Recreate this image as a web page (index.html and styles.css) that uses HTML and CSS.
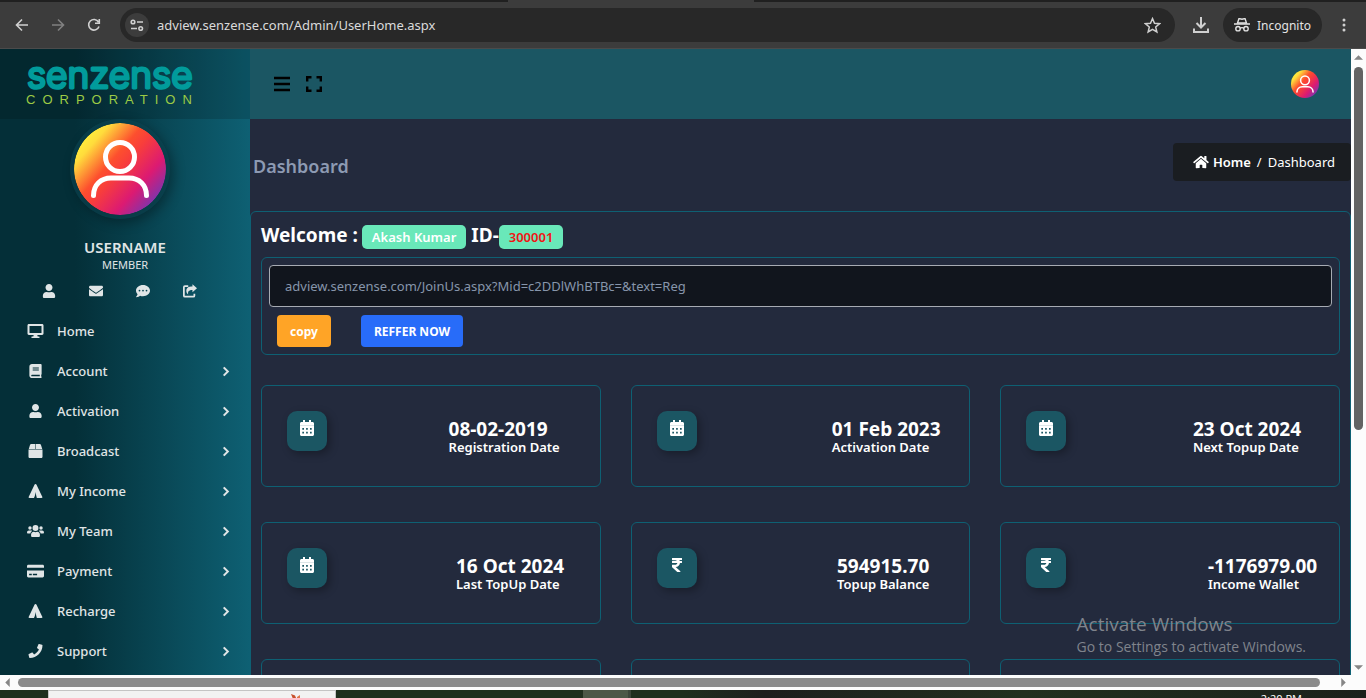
FILE: index.html
```html
<!DOCTYPE html>
<html lang="en">

<head>
    <meta charset="UTF-8">
    <meta name="viewport" content="width=device-width, initial-scale=1.0">
    <title>Dashboard</title>
    <link rel="stylesheet" href="styles.css">
</head>

<body>
    <svg class="sprite" aria-hidden="true">
        <symbol id="i-user" viewBox="0 0 448 512"><path d="M224 256c70.700 0 128-57.300 128-128S294.700 0 224 0 96 57.300 96 128s57.300 128 128 128zm89.600 32h-16.700c-22.200 10.200-46.900 16-72.900 16s-50.600-5.800-72.900-16h-16.700C60.200 288 0 348.200 0 422.400V464c0 26.500 21.500 48 48 48h352c26.500 0 48-21.500 48-48v-41.600c0-74.200-60.200-134.400-134.400-134.400z"/></symbol>
        <symbol id="i-mail" viewBox="0 0 512 512"><path d="M502.300 190.800c3.900-3.100 9.700-.2 9.700 4.700V400c0 26.500-21.500 48-48 48H48c-26.500 0-48-21.500-48-48V195.600c0-5 5.700-7.800 9.700-4.700 22.400 17.400 52.100 39.500 154.100 113.600 21.100 15.400 56.700 47.800 92.200 47.600 35.700.3 72-32.800 92.300-47.600 102-74.100 131.600-96.300 154-113.700zM256 320c23.200.4 56.600-29.200 73.400-41.400 132.700-96.300 142.800-104.700 173.400-128.700 5.800-4.500 9.200-11.500 9.200-18.900v-19c0-26.500-21.500-48-48-48H48c-26.500 0-48 21.500-48 48v19c0 7.400 3.400 14.300 9.200 18.900 30.600 23.900 40.700 32.400 173.400 128.700 16.800 12.200 50.200 41.800 73.400 41.400z"/></symbol>
        <symbol id="i-chat" viewBox="0 0 512 512"><path fill-rule="evenodd" d="M256 32C114.600 32 0 125.100 0 240c0 49.600 21.400 95 57 130.700C44.500 421.100 2.700 466 2.200 466.500c-2.200 2.300-2.800 5.700-1.500 8.700S4.800 480 8 480c66.300 0 116-31.800 140.600-51.400 32.700 12.300 69 19.400 107.400 19.400 141.400 0 256-93.100 256-208S397.400 32 256 32zM96 240a32 32 0 1 0 64 0a32 32 0 1 0-64 0zM224 240a32 32 0 1 0 64 0a32 32 0 1 0-64 0zM352 240a32 32 0 1 0 64 0a32 32 0 1 0-64 0z"/></symbol>
        <symbol id="i-share" viewBox="0 0 16 16"><path d="M6 2.500H2.200C1.500 2.500 1 3 1 3.700v9.600c0 .7.5 1.200 1.200 1.200h9.600c.7 0 1.200-.5 1.200-1.200v-2.300" fill="none" stroke="currentColor" stroke-width="2"/><path d="M16 4.800L10.800.3v2.600C6.200 3 3.800 4.300 3.800 7.900c0 1.700.9 3.200 2.100 4-.5-3.400.7-4.900 4.900-5v2.600z"/></symbol>
        <symbol id="i-desktop" viewBox="0 0 16 14"><path fill-rule="evenodd" d="M1.400 0h13.200C15.400 0 16 .6 16 1.400v8.200c0 .8-.6 1.400-1.400 1.400h-4.800l.4 1.500h1.300c.9 0 .9 1.500 0 1.500h-7c-.9 0-.9-1.500 0-1.500h1.300l.4-1.500H1.400C.6 11 0 10.400 0 9.600V1.400C0 .6.600 0 1.400 0zM2 2v7h12V2z"/></symbol>
        <symbol id="i-book" viewBox="0 0 14 16"><path fill-rule="evenodd" d="M3 0h10c.6 0 1 .4 1 1v10.500c0 .4-.2.700-.5.900v1.600c.7.300.7 2-.1 2H3c-1.700 0-3-1.300-3-3V3c0-1.700 1.300-3 3-3zM3.800 4v1.200h7V4zM3.800 6.300v1.200h7V6.300zM3 12.200c-1.200 0-1.200 1.900 0 1.900h8.900v-1.900z"/></symbol>
        <symbol id="i-box" viewBox="0 0 16 16"><path d="M3.200 0h4.500v5.700H.3l1.500-4.800C2 .3 2.500 0 3.200 0zM8.300 0h4.500c.7 0 1.200.3 1.400.9l1.500 4.800H8.300zM0 6.300h16v8.200c0 .8-.7 1.500-1.500 1.500h-13C.7 16 0 15.300 0 14.500z"/></symbol>
        <symbol id="i-tent" viewBox="0 0 16 16"><path d="M8 0c.6 0 1 .3 1.300 1L16 15.200c-.2.600-.6.800-1.200.8H9.500c-.6-2-1-4.500-1.300-7-.4 2.500-.9 5-2 7H1.200c-.6 0-1-.2-1.200-.8L6.700 1C7 .3 7.400 0 8 0z"/></symbol>
        <symbol id="i-users" viewBox="0 0 20 16"><circle cx="3.500" cy="4.500" r="2"/><circle cx="16.500" cy="4.500" r="2"/><circle cx="10" cy="4.500" r="3.500"/><path d="M0 10c0-1.400.9-2.500 2.200-2.500h2.600c.5 0 1 .2 1.300.5C5 8.700 4.200 9.700 4 11H.9C.4 11 0 10.600 0 10zM20 10c0-1.400-.9-2.500-2.200-2.500h-2.600c-.5 0-1 .2-1.300.5 1.100.7 1.900 1.700 2.100 3h3.100c.5 0 .9-.4.9-1zM4.800 12.500C4.800 10.300 6.300 9 8 9c1.500.6 2.500.6 4 0 1.700 0 3.200 1.300 3.200 3.500v1c0 .8-.7 1.500-1.500 1.500H6.300c-.8 0-1.500-.7-1.500-1.500z"/></symbol>
        <symbol id="i-card" viewBox="0 0 16 12"><path fill-rule="evenodd" d="M1.300 0h13.400c.7 0 1.300.6 1.300 1.300V3H0V1.300C0 .6.600 0 1.300 0zM0 5.500h16v5.200c0 .7-.6 1.300-1.300 1.300H1.300C.6 12 0 11.400 0 10.700zM2 8.500V10h2.500V8.500zM5.500 8.500V10h4V8.500z"/></symbol>
        <symbol id="i-phone" viewBox="0 0 512 512"><path d="M493.400 24.600l-104-24c-11.300-2.600-22.900 3.300-27.500 13.900l-48 112c-4.200 9.800-1.400 21.300 6.900 28l60.600 49.600c-36 76.700-98.900 140.500-177.200 177.200l-49.600-60.600c-6.800-8.300-18.200-11.100-28-6.900l-112 48C3.900 366.500-2 378.100.6 389.400l24 104C27.100 504.200 36.700 512 48 512c256.100 0 464-207.500 464-464 0-11.200-7.700-20.900-18.600-23.400z"/></symbol>
        <symbol id="i-right" viewBox="0 0 8 12"><path d="M1.500 1.500L6 6l-4.500 4.500" fill="none" stroke="currentColor" stroke-width="2.200"/></symbol>
        <symbol id="i-home" viewBox="0 0 576 512"><path d="M280.370 148.260L96 300.110V464a16 16 0 0 0 16 16l112.060-.29a16 16 0 0 0 15.920-16V368a16 16 0 0 1 16-16h64a16 16 0 0 1 16 16v95.640a16 16 0 0 0 16 16.050L464 480a16 16 0 0 0 16-16V300L295.670 148.260a12.190 12.190 0 0 0-15.300 0zM571.600 251.470L488 182.560V44.050a12 12 0 0 0-12-12h-56a12 12 0 0 0-12 12v72.610L318.470 43a48 48 0 0 0-61 0L4.340 251.470a12 12 0 0 0-1.600 16.900l25.500 31A12 12 0 0 0 45.150 301l235.220-193.740a12.190 12.190 0 0 1 15.300 0L530.900 301a12 12 0 0 0 16.900-1.600l25.500-31a12 12 0 0 0-1.700-16.930z"/></symbol>
        <symbol id="i-calendar" viewBox="0 0 14 16"><path d="M3 0h2v2h4V0h2v2h1.500c.8 0 1.500.7 1.500 1.500V5H0V3.500C0 2.700.7 2 1.500 2H3z"/><path opacity=".85" d="M0 5h14v1H0z"/><path fill-rule="evenodd" d="M0 6h14v8.500c0 .8-.7 1.500-1.500 1.500h-11C.7 16 0 15.300 0 14.500zM2.300 8v1.700H4V8zM6.100 8v1.700h1.700V8zM10 8v1.700h1.700V8zM2.300 11.700v1.700H4v-1.700zM6.100 11.700v1.700h1.700v-1.700zM10 11.700v1.700h1.700v-1.700z"/></symbol>
        <symbol id="i-rupee" viewBox="0 0 320 512"><path d="M308 96c6.627 0 12-5.373 12-12V44c0-6.627-5.373-12-12-12H12C5.373 32 0 37.373 0 44v44.748c0 6.627 5.373 12 12 12h85.280c27.308 0 48.261 9.958 60.970 27.252H12c-6.627 0-12 5.373-12 12v40c0 6.627 5.373 12 12 12h158.757c-6.217 36.086-32.558 58.632-74.757 58.632H12c-6.627 0-12 5.373-12 12v53.012c0 3.349 1.400 6.546 3.861 8.818l165.052 152.356a12 12 0 0 0 8.139 3.182h82.562c10.924 0 16.166-13.408 8.139-20.818L116.871 319.906c76.499-2.340 131.144-53.395 138.318-127.906H308c6.627 0 12-5.373 12-12v-40c0-6.627-5.373-12-12-12h-58.690c-3.486-11.541-8.280-22.246-14.252-32H308z"/></symbol>
        <symbol id="i-avatar" viewBox="0 0 92 92">
            <linearGradient id="sunset" x1="0.1" y1="0.15" x2="0.9" y2="0.85">
                <stop offset="0" stop-color="#fff03c"/>
                <stop offset="0.12" stop-color="#ffdc3c"/>
                <stop offset="0.38" stop-color="#fd4f2e"/>
                <stop offset="0.5" stop-color="#f83e3b"/>
                <stop offset="0.76" stop-color="#dc1a72"/>
                <stop offset="1" stop-color="#7a35b0"/>
            </linearGradient>
            <circle cx="46" cy="46" r="46" fill="url(#sunset)"/>
            <circle cx="46" cy="34" r="14.500" fill="none" stroke="#fff" stroke-width="5"/>
            <path d="M19.500 72.500C19.500 62 27 55 37 55h18c10 0 17.500 7 17.500 17.500" fill="none" stroke="#fff" stroke-width="5" stroke-linecap="round"/>
        </symbol>
    </svg>

    <div class="tabs"><span class="tab"></span></div>
    <div class="toolbar">
        <button class="tool" aria-label="Back"><svg viewBox="0 0 14 14"><path d="M13 7H2M7 1.500L1.500 7 7 12.500"/></svg></button>
        <button class="tool dim" aria-label="Forward"><svg viewBox="0 0 14 14"><path d="M1 7h11M7 1.500L12.500 7 7 12.500"/></svg></button>
        <button class="tool" aria-label="Reload"><svg viewBox="0 0 14 14"><path d="M12 8.500A5.300 5.300 0 1 1 11.500 4M12.300 1v4.200H8"/></svg></button>
        <div class="address">
            <button class="site" aria-label="Site settings"><svg viewBox="0 0 14 12"><path d="M7 3h6M1 9.500h6"/><circle cx="3" cy="3" r="1.800"/><circle cx="10.700" cy="9.500" r="1.800"/></svg></button>
            <input class="url" type="text" aria-label="Address" value="adview.senzense.com/Admin/UserHome.aspx">
            <button class="tool" aria-label="Bookmark"><svg class="star" viewBox="0 0 16 16"><path d="M8 1.500l1.900 4.400 4.700.4-3.600 3.100 1.100 4.700L8 11.600l-4.100 2.500L5 9.400 1.400 6.300l4.700-.4z"/></svg></button>
        </div>
        <button class="tool download" aria-label="Downloads"><svg viewBox="0 0 16 16"><path d="M8 0v10M3.500 6L8 10.500 12.500 6M1 11.500V15h14v-3.500"/></svg></button>
        <button class="incognito">
            <svg viewBox="0 0 16 14"><path d="M3.500 5L5 .5l3 .8 3-.8L12.500 5z"/><path d="M0 6h16M6 10.500c1-1 3-1 4 0"/><circle cx="4" cy="10.700" r="2.200"/><circle cx="12" cy="10.700" r="2.200"/></svg>
            Incognito
        </button>
        <button class="dots" aria-label="Menu"><svg viewBox="0 0 4 14"><circle cx="2" cy="2" r="1.500"/><circle cx="2" cy="7" r="1.500"/><circle cx="2" cy="12" r="1.500"/></svg></button>
    </div>

    <div class="window">
        <div class="page">
            <aside class="sidebar">
                <div class="brand">
                    <svg class="brand-name" viewBox="0 0 170 26"><text x="1" y="22">senzense</text></svg>
                    <span class="brand-sub">CORPORATION</span>
                </div>
                <div class="profile">
                    <svg class="avatar"><use href="#i-avatar"/></svg>
                    <strong class="username">USERNAME</strong>
                    <span class="role">MEMBER</span>
                    <div class="quick">
                        <a href="#" aria-label="Profile"><svg><use href="#i-user"/></svg></a>
                        <a href="#" aria-label="Mail"><svg><use href="#i-mail"/></svg></a>
                        <a href="#" aria-label="Chat"><svg><use href="#i-chat"/></svg></a>
                        <a href="#" aria-label="Share"><svg><use href="#i-share"/></svg></a>
                    </div>
                </div>
                <nav class="menu">
                    <a href="#"><svg><use href="#i-desktop"/></svg><span>Home</span></a>
                    <a href="#"><svg><use href="#i-book"/></svg><span>Account</span><svg class="arrow"><use href="#i-right"/></svg></a>
                    <a href="#"><svg><use href="#i-user"/></svg><span>Activation</span><svg class="arrow"><use href="#i-right"/></svg></a>
                    <a href="#"><svg><use href="#i-box"/></svg><span>Broadcast</span><svg class="arrow"><use href="#i-right"/></svg></a>
                    <a href="#"><svg><use href="#i-tent"/></svg><span>My Income</span><svg class="arrow"><use href="#i-right"/></svg></a>
                    <a href="#"><svg><use href="#i-users"/></svg><span>My Team</span><svg class="arrow"><use href="#i-right"/></svg></a>
                    <a href="#"><svg><use href="#i-card"/></svg><span>Payment</span><svg class="arrow"><use href="#i-right"/></svg></a>
                    <a href="#"><svg><use href="#i-tent"/></svg><span>Recharge</span><svg class="arrow"><use href="#i-right"/></svg></a>
                    <a href="#"><svg><use href="#i-phone"/></svg><span>Support</span><svg class="arrow"><use href="#i-right"/></svg></a>
                </nav>
            </aside>

            <div class="main">
                <header class="header">
                    <button aria-label="Toggle menu"><svg viewBox="0 0 16 16"><path d="M0 2h16M0 8h16M0 14h16" stroke="currentColor" stroke-width="2.500"/></svg></button>
                    <button aria-label="Full screen"><svg viewBox="0 0 16 16"><path d="M1.200 5.500V1.200h4.300M10.500 1.200h4.300v4.300M14.800 10.500v4.300h-4.300M5.500 14.800H1.200v-4.300" fill="none" stroke="currentColor" stroke-width="2.400"/></svg></button>
                    <button class="account" aria-label="Account"><svg><use href="#i-avatar"/></svg></button>
                </header>

                <div class="title-bar">
                    <h1>Dashboard</h1>
                    <div class="breadcrumb">
                        <a href="#"><svg><use href="#i-home"/></svg>Home</a>
                        <span>/</span>
                        <span>Dashboard</span>
                    </div>
                </div>

                <section class="panel">
                    <div class="welcome">
                        <span>Welcome :</span> <span class="badge">Akash Kumar</span> <span>ID-</span><span class="badge id">300001</span>
                    </div>
                    <div class="refer">
                        <input type="text" aria-label="Referral link" value="adview.senzense.com/JoinUs.aspx?Mid=c2DDlWhBTBc=&amp;text=Reg">
                        <div class="refer-buttons">
                            <button class="copy">copy</button>
                            <button class="now">REFFER NOW</button>
                        </div>
                    </div>
                    <div class="stats">
                        <div class="stat">
                            <span class="stat-icon"><svg><use href="#i-calendar"/></svg></span>
                            <div class="stat-text"><b>08-02-2019</b><span>Registration Date</span></div>
                        </div>
                        <div class="stat">
                            <span class="stat-icon"><svg><use href="#i-calendar"/></svg></span>
                            <div class="stat-text"><b>01 Feb 2023</b><span>Activation Date</span></div>
                        </div>
                        <div class="stat">
                            <span class="stat-icon"><svg><use href="#i-calendar"/></svg></span>
                            <div class="stat-text"><b>23 Oct 2024</b><span>Next Topup Date</span></div>
                        </div>
                        <div class="stat">
                            <span class="stat-icon"><svg><use href="#i-calendar"/></svg></span>
                            <div class="stat-text"><b>16 Oct 2024</b><span>Last TopUp Date</span></div>
                        </div>
                        <div class="stat">
                            <span class="stat-icon"><svg><use href="#i-rupee"/></svg></span>
                            <div class="stat-text"><b>594915.70</b><span>Topup Balance</span></div>
                        </div>
                        <div class="stat">
                            <span class="stat-icon"><svg><use href="#i-rupee"/></svg></span>
                            <div class="stat-text"><b>-1176979.00</b><span>Income Wallet</span></div>
                        </div>
                        <div class="stat"></div>
                        <div class="stat"></div>
                        <div class="stat"></div>
                    </div>
                </section>
            </div>
        </div>
        <div class="scroll-y">
            <svg viewBox="0 0 10 5"><path d="M5 0l5 5H0z"/></svg>
            <div class="thumb"></div>
            <svg viewBox="0 0 10 5"><path d="M0 0h10L5 5z"/></svg>
        </div>
        <div class="watermark">
            <div class="watermark-title">Activate Windows</div>
            <div>Go to Settings to activate Windows.</div>
        </div>
    </div>
    <div class="scroll-x">
        <svg viewBox="0 0 5 10"><path d="M5 0v10L0 5z"/></svg>
        <div class="thumb"></div>
        <svg viewBox="0 0 5 10"><path d="M0 0l5 5-5 5z"/></svg>
    </div>
    <footer class="taskbar">
        <div class="search"><svg viewBox="0 0 10 6"><path d="M0 1l4 1.500L5.500 6H2z" fill="#c8502d"/><path d="M6 4l3-2v4H6z" fill="#e0764a"/></svg></div>
        <div class="task"></div>
        <span class="clock">2:20 PM</span>
    </footer>
</body>

</html>
```
FILE: styles.css
```css
* {
    box-sizing: border-box;
}

body {
    margin: 0;
    height: 100vh;
    display: flex;
    flex-direction: column;
    overflow: hidden;
    background-color: #232a3d;
    color: #fff;
    font-family: "Noto Sans", sans-serif;
    font-size: 13px;
}

button {
    border: none;
    padding: 0;
    background: none;
    color: inherit;
    font: inherit;
    cursor: pointer;
}

a {
    color: inherit;
    text-decoration: none;
}

svg {
    display: block;
    fill: currentColor;
}

.sprite {
    position: absolute;
    width: 0;
    height: 0;
}

/* Browser bar */
.tabs {
    flex: none;
    display: flex;
    height: 2px;
    padding-left: 508px;
    background-color: #202020;
}

.tab {
    width: 246px;
    background-color: #3c3c3c;
}

.toolbar {
    flex: none;
    display: flex;
    align-items: center;
    height: 47px;
    padding: 0 20px 0 4px;
    background-color: #3c3c3c;
    border-bottom: 1px solid #4b4b4b;
    color: #d0d0d0;
}

.tool {
    flex: none;
    width: 36px;
}

.tool svg {
    width: 14px;
    height: 14px;
    margin: 0 auto;
    fill: none;
    stroke: currentColor;
    stroke-width: 1.6;
}

.tool .star {
    width: 17px;
    height: 17px;
    stroke-width: 1.4;
}

.dim {
    color: #808080;
}

.address {
    flex: 1;
    display: flex;
    align-items: center;
    height: 34px;
    margin-left: 8px;
    padding: 0 5px;
    border-radius: 17px;
    background-color: #282828;
}

.site {
    width: 24px;
    height: 24px;
    border-radius: 50%;
    background-color: #3c3c3c;
}

.site svg {
    width: 14px;
    height: 12px;
    margin: 0 auto;
    fill: none;
    stroke: currentColor;
    stroke-width: 1.6;
}

.url {
    flex: 1;
    border: none;
    padding: 0 8px;
    background: none;
    color: #dadada;
    font-family: "Noto Sans", sans-serif;
    font-size: 13px;
}

.download {
    margin: 0 4px 0 8px;
}

.download svg {
    width: 16px;
    height: 16px;
    stroke-width: 2;
}

.incognito {
    flex: none;
    display: flex;
    align-items: center;
    gap: 7px;
    height: 34px;
    padding: 0 11px;
    border-radius: 17px;
    background-color: #282828;
    color: #e3e3e3;
    font-size: 12px;
}

.incognito svg {
    width: 16px;
    height: 14px;
    stroke: currentColor;
    stroke-width: 1.4;
    fill: none;
}

.dots {
    margin-left: 20px;
}

.dots svg {
    width: 4px;
    height: 14px;
}

/* Page */
.window {
    position: relative;
    flex: 1;
    min-height: 0;
    display: flex;
}

.page {
    flex: 1;
    display: flex;
    overflow: hidden;
}

.sidebar {
    flex: none;
    width: 250px;
    background-image: linear-gradient(to right, #042f38 30%, #0e6073);
    color: #e0e5e6;
}

.brand {
    display: flex;
    flex-direction: column;
    gap: 1px;
    height: 70px;
    padding: 17px 26px 0;
    background-color: rgba(0, 0, 0, 0.15);
}

.brand-name {
    width: 170px;
    height: 26px;
    overflow: visible;
    fill: #019b9b;
    stroke: #019b9b;
    stroke-width: 3;
    stroke-linejoin: round;
    font-family: Inter, sans-serif;
    font-size: 37px;
    font-weight: 300;
}

.brand-sub {
    color: #9ccb45;
    font-family: "Liberation Sans", sans-serif;
    font-size: 13px;
    line-height: 13px;
    letter-spacing: 7px;
}

.profile {
    display: flex;
    flex-direction: column;
    align-items: center;
}

.avatar {
    width: 92px;
    height: 92px;
    margin: 4px 10px 0 0;
    border-radius: 50%;
    box-shadow: 0 0 0 4px rgba(12, 70, 84, 0.6), 4px 4px 12px 4px rgba(0, 0, 0, 0.3);
}

.username {
    margin-top: 22px;
    font-size: 15px;
    font-weight: 600;
    line-height: 20px;
}

.role {
    font-size: 11px;
    line-height: 16px;
}

.quick {
    display: flex;
    gap: 31px;
    margin: 11px 12px 13px 0;
}

.quick svg {
    width: 16px;
    height: 14px;
}

.menu a {
    display: flex;
    align-items: center;
    height: 40px;
    padding: 0 20px 0 27px;
    font-size: 13px;
    font-weight: 500;
}

.menu svg {
    width: 17px;
    height: 14px;
}

.menu span {
    flex: 1;
    padding-left: 13px;
}

.menu .arrow {
    width: 8px;
    height: 11px;
}

.main {
    flex: 1;
    min-width: 0;
}

.header {
    display: flex;
    align-items: center;
    gap: 16px;
    height: 70px;
    padding: 0 32px 0 24px;
    background-color: #1b5663;
    color: #000;
}

.header svg {
    width: 16px;
    height: 16px;
}

.header .account {
    margin-left: auto;
}

.header .account svg {
    width: 28px;
    height: 28px;
}

.title-bar {
    display: flex;
    align-items: center;
    justify-content: space-between;
    padding: 24px 0 30px 3px;
}

h1 {
    margin: 8px 0 0;
    color: #8d9ab3;
    font-size: 18px;
    font-weight: 600;
    line-height: 24px;
}

.breadcrumb {
    display: flex;
    align-items: center;
    gap: 6px;
    height: 38px;
    padding: 0 16px 0 20px;
    border-radius: 4px;
    background-color: #1a1d21;
    font-size: 13px;
}

.breadcrumb a {
    display: flex;
    align-items: center;
    gap: 4px;
    font-weight: 600;
}

.breadcrumb svg {
    width: 16px;
    height: 14px;
}

.panel {
    border: 1px solid #0e6073;
    border-radius: 6px;
    padding: 13px 10px;
}

.welcome {
    display: flex;
    height: 24px;
    font-size: 19px;
    font-weight: bold;
    line-height: 20px;
}

.badge {
    margin-left: 4px;
    margin-right: 5px;
    padding: 0 10px;
    border-radius: 5px;
    background-color: #69e8b9;
    font-size: 13px;
    font-weight: 600;
    line-height: 24px;
}

.badge.id {
    margin: 0;
    color: #f01414;
}

.refer {
    margin: 8px 0 30px;
    padding: 7px;
    border: 1px solid #0e6073;
    border-radius: 6px;
}

.refer input {
    display: block;
    width: 100%;
    height: 42px;
    padding: 0 15px;
    border: 1px solid #a7abb3;
    border-radius: 4px;
    background-color: #11151d;
    color: #8795ab;
    font-family: "Noto Sans", sans-serif;
    font-size: 13px;
}

.refer-buttons {
    display: flex;
    gap: 30px;
    padding: 8px 8px 0;
}

.refer-buttons button {
    height: 32px;
    padding: 0 13px;
    border-radius: 4px;
    font-size: 12px;
    font-weight: bold;
}

.copy {
    background-color: #ffa426;
}

.now {
    background-color: #286cf9;
}

.stats {
    display: grid;
    grid-template-columns: repeat(3, 1fr);
    gap: 35px 30px;
}

.stat {
    display: flex;
    justify-content: space-between;
    height: 102px;
    padding: 25px 40px 25px 25px;
    border: 1px solid #0e6073;
    border-radius: 6px;
}

.stat-icon {
    width: 40px;
    height: 40px;
    padding-top: 9px;
    border-radius: 10px;
    background-color: #1b5663;
    box-shadow: 3px 3px 8px rgba(0, 0, 0, 0.3);
}

.stat-icon svg {
    width: 16px;
    height: 16px;
    margin: 0 auto;
}

/* the caption sets the width of the block, the value may run past it */
.stat-text {
    display: flex;
    flex-direction: column;
    padding-top: 8px;
    white-space: nowrap;
}

.stat-text b {
    width: 0;
    font-size: 19px;
    line-height: 20px;
}

.stat-text span {
    font-size: 13px;
    font-weight: 600;
    line-height: 17px;
}

/* Scroll bars and desktop */
.scroll-y {
    flex: none;
    display: flex;
    flex-direction: column;
    align-items: center;
    width: 15px;
    padding: 6px 0 5px;
    background-color: #fcfcfc;
    color: #868686;
}

.scroll-y svg {
    width: 9px;
    height: 5px;
}

.scroll-y .thumb {
    width: 9px;
    height: 59%;
    margin: 7px 0 auto;
    border-radius: 5px;
    background-color: #636363;
}

.scroll-x {
    flex: none;
    display: flex;
    align-items: center;
    height: 15px;
    padding: 0 20px 0 5px;
    background-color: #fcfcfc;
    color: #868686;
}

.scroll-x svg {
    width: 5px;
    height: 9px;
}

.scroll-x .thumb {
    flex: 1;
    height: 9px;
    margin: 0 21px 0 8px;
    border-radius: 5px;
    background-color: #8b8b8b;
}

.watermark {
    position: absolute;
    right: 60px;
    bottom: 18px;
    color: #80848c;
    font-family: "Open Sans", sans-serif;
    font-size: 14px;
    line-height: 20px;
}

.watermark-title {
    font-size: 19px;
    line-height: 26px;
}

.taskbar {
    flex: none;
    display: flex;
    height: 8px;
    padding: 0 64px 0 48px;
    overflow: hidden;
    background-image: linear-gradient(to right, #1f2f1e 50%, #1d1f1d 56%, #22301f 75%, #1b211b);
}

.search {
    width: 288px;
    padding: 2px 0 0 242px;
    border: 1px solid #c4c4c4;
    border-bottom: none;
    background-color: #f2f2f2;
}

.search svg {
    width: 10px;
    height: 6px;
}

.task {
    width: 48px;
    margin-left: 247px;
    border-right: 3px solid #3c463a;
    background-color: #4c5847;
}

.clock {
    margin-left: auto;
    padding-top: 3px;
    font-family: "Open Sans", sans-serif;
    font-size: 11px;
    line-height: 12px;
}
```
